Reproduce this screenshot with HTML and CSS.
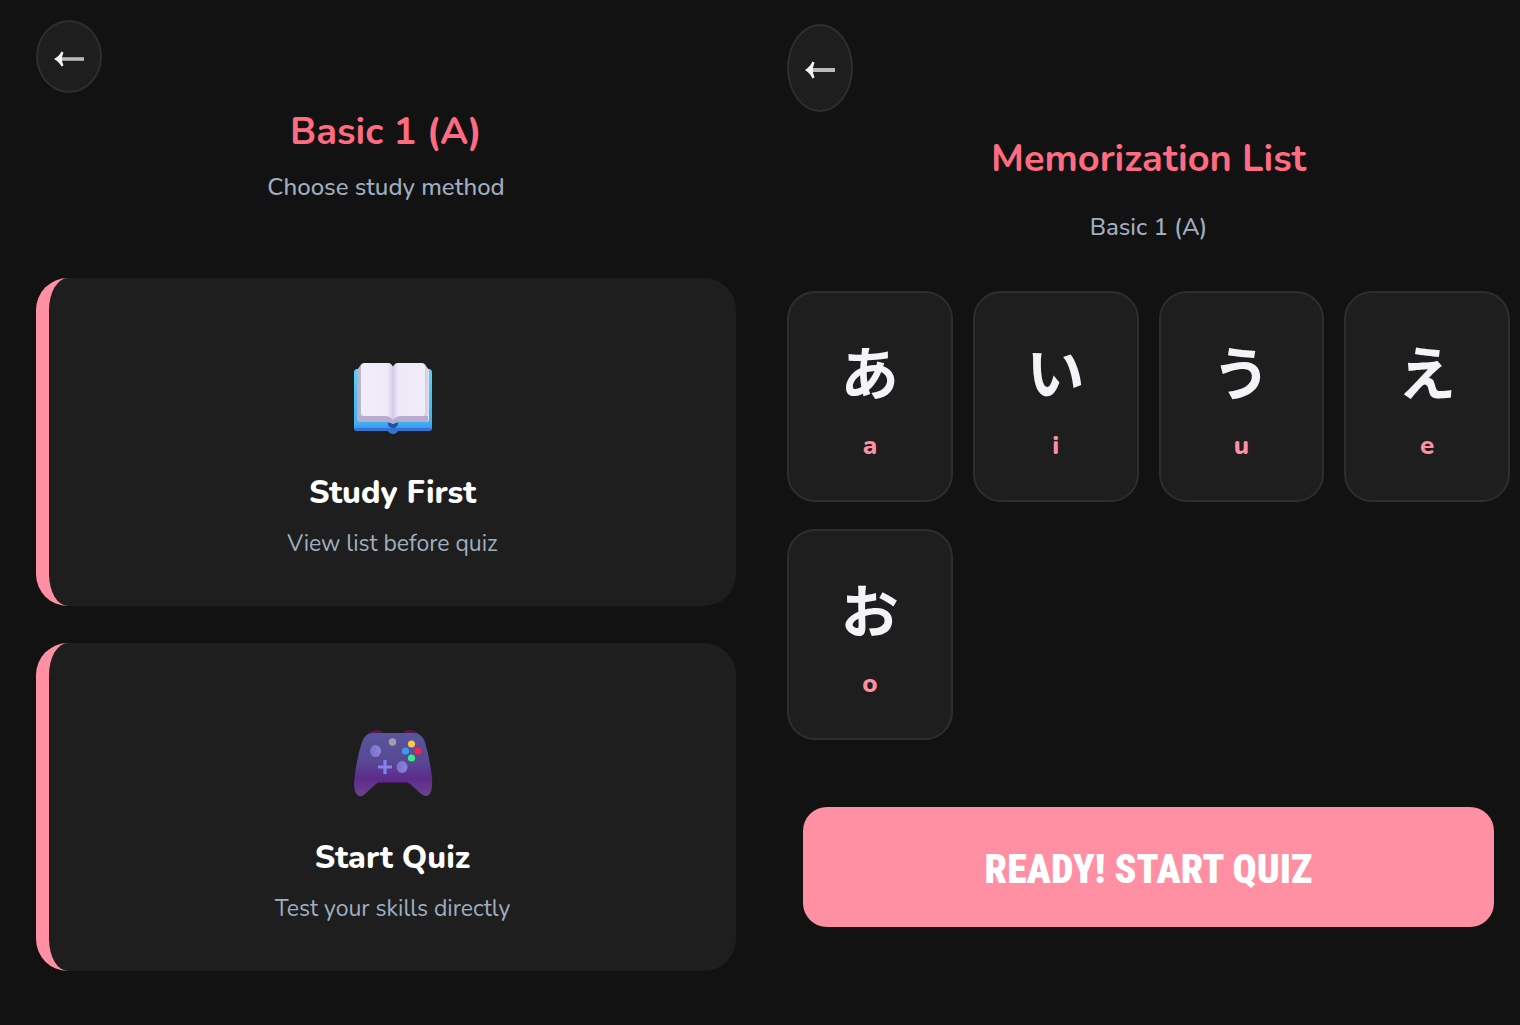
FILE: index.html
```html
<!DOCTYPE html>
<html lang="en">
<head>
<meta charset="utf-8">
<meta name="viewport" content="width=device-width, initial-scale=1">
<title>Basic 1 (A)</title>
<link rel="stylesheet" href="styles.css">
</head>
<body>
<main class="screens">
  <section class="screen">
    <button class="back" type="button" aria-label="Back">
      <svg width="32" height="18" viewBox="0 0 32 18" aria-hidden="true"><path d="M7 9H31" stroke="#bbb9bb" stroke-width="3.6"/><path d="M8.500 1.500L10.500 2.500L9 7V11L10.500 15.500L8.500 16.500Q6 11.500 1 9Q6 6.500 8.500 1.500Z" fill="#f4f4f8"/></svg>
    </button>
    <header class="heading">
      <h1 class="title">Basic 1 (A)</h1>
      <p class="subtitle">Choose study method</p>
    </header>
    <div class="methods">
      <button class="method" type="button">
        <svg class="method-icon" width="80" height="72" viewBox="0 0 80 72" aria-hidden="true">
          <defs>
            <linearGradient id="page" x1="0" x2="1"><stop offset="0" stop-color="#f1edf9"/><stop offset=".42" stop-color="#eee9f8"/><stop offset=".5" stop-color="#d4cbe8"/><stop offset=".58" stop-color="#eee9f8"/><stop offset="1" stop-color="#f0ecf8"/></linearGradient>
            <linearGradient id="cover" x1="0" y1="0" x2="0" y2="1"><stop offset="0" stop-color="#5fd0f5"/><stop offset=".85" stop-color="#3fadf2"/><stop offset="1" stop-color="#3678d8"/></linearGradient>
            <linearGradient id="edge" x1="0" x2="1"><stop offset="0" stop-color="#b5b0c4"/><stop offset=".1" stop-color="#c6bdd8"/><stop offset=".9" stop-color="#c8bedb"/><stop offset="1" stop-color="#e2deea"/></linearGradient>
          </defs>
          <path d="M4 7H76Q79 7 79 11V66Q79 69 76 69H45Q43 72 40 72Q37 72 35 69H4Q1 69 1 66V11Q1 7 4 7Z" fill="url(#cover)"/>
          <path d="M2 66H78Q78 69 76 69H45Q43 72 40 72Q37 72 35 69H4Q2 69 2 66Z" fill="#3472d2"/>
          <ellipse cx="40" cy="62" rx="5" ry="4" fill="#1955a4"/>
          <path d="M7 4Q8 1 12 1H35Q38 1 40 5Q42 1 45 1H68Q72 1 73 4L76 8V57Q76 60 73 60H45Q42 60 40 62Q38 60 35 60H7Q4 60 4 57V8Z" fill="url(#edge)"/>
          <path d="M5 54H75V57Q75 60 72 60H45L40 62L35 60H8Q5 60 5 57Z" fill="#b9abd0"/>
          <path d="M8 4Q9 1 12 1H35Q38 1 40 5Q42 1 45 1H68Q71 1 72 4V51Q72 54 69 54H48Q43 54 40 58Q37 54 32 54H11Q8 54 8 51Z" fill="url(#page)"/>
        </svg>
        <span class="method-name">Study First</span>
        <span class="method-note">View list before quiz</span>
      </button>
      <button class="method" type="button">
        <svg class="method-icon" width="80" height="72" viewBox="0 -2 80 72" aria-hidden="true">
          <defs>
            <linearGradient id="pad" x1="0" y1="0" x2="0" y2="1"><stop offset="0" stop-color="#56569a"/><stop offset=".45" stop-color="#594894"/><stop offset=".72" stop-color="#5d2b8c"/><stop offset="1" stop-color="#6a438d"/></linearGradient>
            <linearGradient id="stick" x1="0" x2="1"><stop offset="0" stop-color="#7772c9"/><stop offset="1" stop-color="#8b84dc"/></linearGradient>
          </defs>
          <path d="M14 6Q17 1 25 1Q28 1 31 5H50Q52 1 55 1Q63 1 66 6Z" fill="#57194f"/>
          <path d="M20 4H60Q69 4 72 13Q77 30 79 49Q80 67 73 67Q70 67 66 63L57 55Q55 53 51 53H29Q25 53 23 55L14 63Q10 68 6 67Q1 65 1 54Q3 31 9 13Q12 4 20 4Z" fill="url(#pad)"/>
          <path d="M26 53H55" stroke="#6418a0" stroke-width="2" opacity=".6"/>
          <ellipse cx="22.500" cy="22" rx="5.500" ry="6" fill="url(#stick)"/><ellipse cx="49" cy="38" rx="5.500" ry="6" fill="url(#stick)"/>
          <path d="M32 31V45M25 38H39" stroke="#8583e8" stroke-width="3.200"/>
          <circle cx="39.500" cy="13" r="3.700" fill="#a59ba9"/>
          <circle cx="58.500" cy="15" r="3.600" fill="#fbc550"/><circle cx="52.500" cy="22" r="3.600" fill="#369df2"/><circle cx="65" cy="22" r="3.600" fill="#ee2453"/><circle cx="58.500" cy="29" r="3.600" fill="#35ed83"/>
        </svg>
        <span class="method-name">Start Quiz</span>
        <span class="method-note">Test your skills directly</span>
      </button>
    </div>
  </section>

  <section class="screen list-screen">
    <button class="back" type="button" aria-label="Back">
      <svg width="32" height="20" viewBox="0 0 32 20" aria-hidden="true"><path d="M7 10H31" stroke="#bbb9bb" stroke-width="4"/><path d="M8.500 1.500L10.500 2.500L9 7.500V12.500L10.500 17.500L8.500 18.500Q6 13 1 10Q6 7 8.500 1.500Z" fill="#f4f4f8"/></svg>
    </button>
    <header class="heading">
      <h1 class="title">Memorization List</h1>
      <p class="subtitle">Basic 1 (A)</p>
    </header>
    <ul class="tiles">
      <li class="tile"><span class="kana" lang="ja">あ</span><span class="romaji">a</span></li>
      <li class="tile"><span class="kana" lang="ja">い</span><span class="romaji">i</span></li>
      <li class="tile"><span class="kana" lang="ja">う</span><span class="romaji">u</span></li>
      <li class="tile"><span class="kana" lang="ja">え</span><span class="romaji">e</span></li>
      <li class="tile"><span class="kana" lang="ja">お</span><span class="romaji">o</span></li>
    </ul>
    <button class="start" type="button">READY! START QUIZ</button>
  </section>
</main>
</body>
</html>
```
FILE: styles.css
```css
* {
  box-sizing: border-box;
}

body {
  margin: 0;
  background: #121212;
  color: #f4f4f8;
  font-family: Nunito, Lato, "Noto Sans", sans-serif;
}

button {
  font: inherit;
  color: inherit;
  cursor: pointer;
}

.screens {
  display: grid;
  grid-template-columns: 700fr 723fr;
  gap: 51px;
  min-height: 100vh;
  padding: 0 10px 0 36px;
}

.screen {
  display: flex;
  flex-direction: column;
  padding: 20px 0 54px;
}

.back {
  display: flex;
  align-items: center;
  justify-content: center;
  width: 66px;
  height: 73px;
  padding: 4px 0 0;
  border: 2px solid #2e2e2e;
  border-radius: 50%;
  background: #1e1e1e;
}

.heading {
  display: flex;
  flex-direction: column;
  gap: 14px;
  padding: 15px 0 74px;
  text-align: center;
}

.title {
  margin: 0;
  color: #ff6b81;
  font-size: 38px;
  font-weight: 700;
  line-height: 48px;
}

.subtitle {
  margin: 0;
  color: #a0aec0;
  font-size: 24px;
  font-weight: 500;
  line-height: 34px;
}

.methods {
  display: flex;
  flex-direction: column;
  gap: 37px;
}

.method {
  display: flex;
  flex-direction: column;
  align-items: center;
  width: 100%;
  height: 328px;
  padding: 84px 0 0;
  border: 0;
  border-left: 13px solid #ff8fa3;
  border-radius: 32px;
  background: #1e1e1e;
}

.method-icon {
  margin-bottom: 37px;
}

.method-name {
  color: #fff;
  font-size: 32px;
  font-weight: 800;
  line-height: 44px;
}

.method-note {
  margin-top: 12px;
  color: #a0aec0;
  font-size: 23px;
  font-weight: 400;
  line-height: 34px;
}

.list-screen {
  padding-top: 24px;
}

.list-screen .back {
  height: 88px;
}

.list-screen .heading {
  gap: 24px;
  padding: 20px 0 47px;
}

.list-screen .title {
  line-height: 54px;
}

.tiles {
  display: grid;
  grid-template-columns: repeat(4, 1fr);
  gap: 27px 20px;
  margin: 0;
  padding: 0;
  list-style: none;
}

.tile {
  display: flex;
  flex-direction: column;
  align-items: center;
  height: 211px;
  padding-top: 35px;
  border: 2px solid #2e2e2e;
  border-radius: 28px;
  background: #1e1e1e;
}

.kana {
  font-family: "Noto Sans CJK JP", sans-serif;
  font-size: 58px;
  font-weight: 700;
  line-height: 84px;
}

.romaji {
  margin-top: 17px;
  color: #ff8fa3;
  font-size: 26px;
  font-weight: 800;
  line-height: 34px;
}

.start {
  height: 120px;
  margin: 67px 16px 0;
  padding: 4px 0 0;
  border: 0;
  border-radius: 24px;
  background: #ff8fa3;
  color: #fff;
  font-family: "Roboto Condensed", "Open Sans Condensed", Roboto, sans-serif;
  font-size: 40px;
  font-weight: 900;
}
```
